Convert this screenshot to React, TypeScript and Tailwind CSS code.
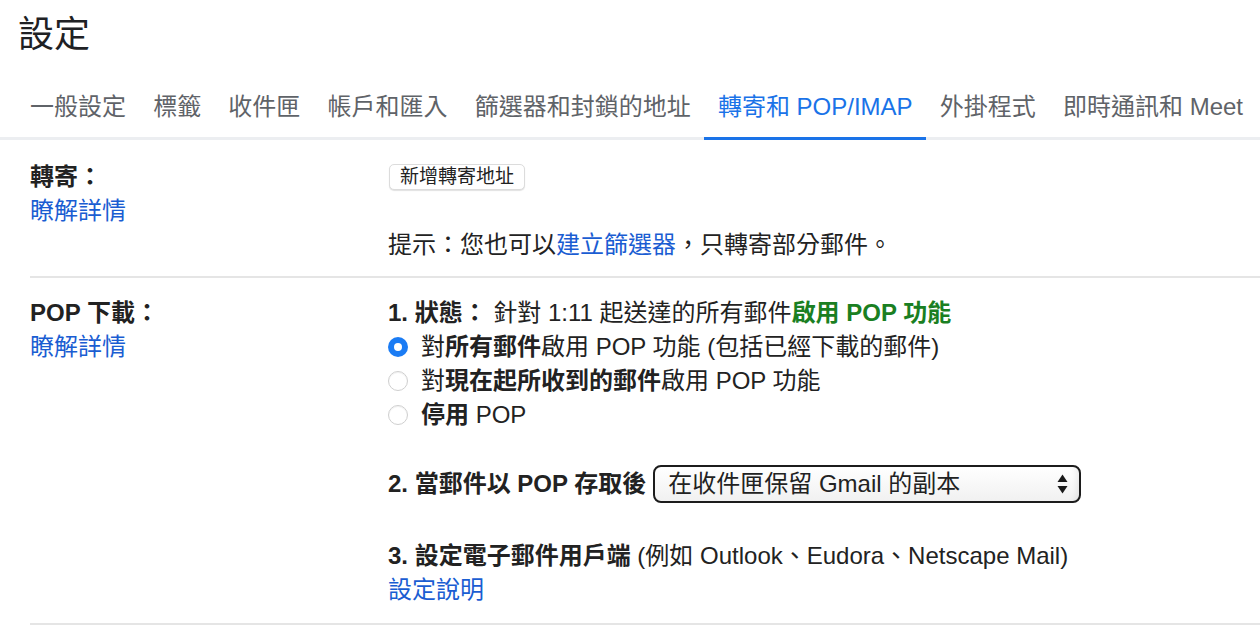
import React from 'react'

const tabs = ['一般設定', '標籤', '收件匣', '帳戶和匯入', '篩選器和封鎖的地址', '轉寄和 POP/IMAP', '外掛程式', '即時通訊和 Meet']
const activeTab = '轉寄和 POP/IMAP'

function Radio({ checked }: { checked?: boolean }) {
  if (checked) {
    return (
      <span className="w-[20px] h-[20px] rounded-full bg-[#1b7cf4] flex items-center justify-center flex-shrink-0">
        <span className="w-[8px] h-[8px] rounded-full bg-white" />
      </span>
    )
  }
  return (
    <span className="w-[20px] h-[20px] rounded-full bg-white border border-[#cfcfcf] shadow-[inset_0_1px_1px_rgba(0,0,0,0.06)] flex-shrink-0" />
  )
}

function SelectArrows() {
  return (
    <svg width="11" height="22" viewBox="0 0 11 22" className="flex-shrink-0">
      <path d="M5.5 1.5 L10.5 9 L0.5 9 Z" fill="#1a1a1a" />
      <path d="M5.5 20.5 L10.5 13 L0.5 13 Z" fill="#1a1a1a" />
    </svg>
  )
}

export default function App() {
  return (
    <div
      className="w-[1260px] h-[626px] overflow-hidden bg-white text-[#222222]"
      style={{ fontFamily: '"Liberation Sans", "Noto Sans CJK TC", sans-serif' }}
    >
      {/* Title */}
      <h1 className="px-[18px] pt-[13px] text-[36px] leading-[44px] font-normal text-[#202124]">設定</h1>

      {/* Tabs */}
      <div className="mt-[31px] flex pl-[16.4px] border-b-[3px] border-[#eceef1] whitespace-nowrap">
        {tabs.map(tab => {
          const active = tab === activeTab
          return (
            <div
              key={tab}
              className={
                active
                  ? 'px-[13.6px] pt-[2px] pb-[13px] -mb-[3px] border-b-[3px] border-[#1a73e8] text-[24px] leading-[34px] text-[#1a73e8]'
                  : 'px-[13.6px] pt-[2px] pb-[13px] -mb-[3px] border-b-[3px] border-transparent text-[24px] leading-[34px] text-[#5f6368]'
              }
            >
              {tab}
            </div>
          )
        })}
      </div>

      <div className="pl-[30px] text-[24px] leading-[34px]">
        {/* Forwarding */}
        <div className="flex pt-[20px] pb-[14px] border-b-2 border-[#e5e5e5]">
          <div className="w-[358px] flex-shrink-0">
            <p className="font-bold">轉寄：</p>
            <a className="text-[#1a5dd2]">瞭解詳情</a>
          </div>
          <div className="flex-1">
            <div className="h-[34px] flex items-center">
              <button className="h-[26px] px-[10px] ml-px bg-white border border-[#dcdcdc] rounded-[5px] shadow-[0_1px_1px_rgba(0,0,0,0.12)] text-[19px] leading-[24px] text-[#222222]">
                新增轉寄地址
              </button>
            </div>
            <p className="mt-[34px]">
              提示：您也可以<a className="text-[#1a5dd2]">建立篩選器</a>，只轉寄部分郵件。
            </p>
          </div>
        </div>

        {/* POP download */}
        <div className="flex pt-[18px] pb-[16px] border-b-2 border-[#e5e5e5]">
          <div className="w-[358px] flex-shrink-0">
            <p className="font-bold">POP 下載：</p>
            <a className="text-[#1a5dd2]">瞭解詳情</a>
          </div>
          <div className="flex-1">
            <p>
              <span className="font-bold">1. 狀態：</span> 針對 1:11 起送達的所有郵件
              <span className="font-bold text-[#1a7f22]">啟用 POP 功能</span>
            </p>
            <div className="flex items-center gap-[13px]">
              <Radio checked />
              <span>
                對<span className="font-bold">所有郵件</span>啟用 POP 功能 (包括已經下載的郵件)
              </span>
            </div>
            <div className="flex items-center gap-[13px]">
              <Radio />
              <span>
                對<span className="font-bold">現在起所收到的郵件</span>啟用 POP 功能
              </span>
            </div>
            <div className="flex items-center gap-[13px]">
              <Radio />
              <span>
                <span className="font-bold">停用</span> POP
              </span>
            </div>

            <div className="mt-[33px] flex items-center gap-[7px]">
              <span className="font-bold">2. 當郵件以 POP 存取後</span>
              <div className="w-[428px] h-[38px] flex items-center justify-between pl-[13px] pr-[11px] border-2 border-[#1c1c1c] rounded-[8px] bg-gradient-to-b from-white to-[#f1f1f1] shadow-[inset_-6px_0_6px_-4px_rgba(0,0,0,0.08)]">
                <span>在收件匣保留 Gmail 的副本</span>
                <SelectArrows />
              </div>
            </div>

            <p className="mt-[36px]">
              <span className="font-bold">3. 設定電子郵件用戶端</span> (例如 Outlook、Eudora、Netscape Mail)
            </p>
            <a className="text-[#1a5dd2]">設定說明</a>
          </div>
        </div>
      </div>
    </div>
  )
}
